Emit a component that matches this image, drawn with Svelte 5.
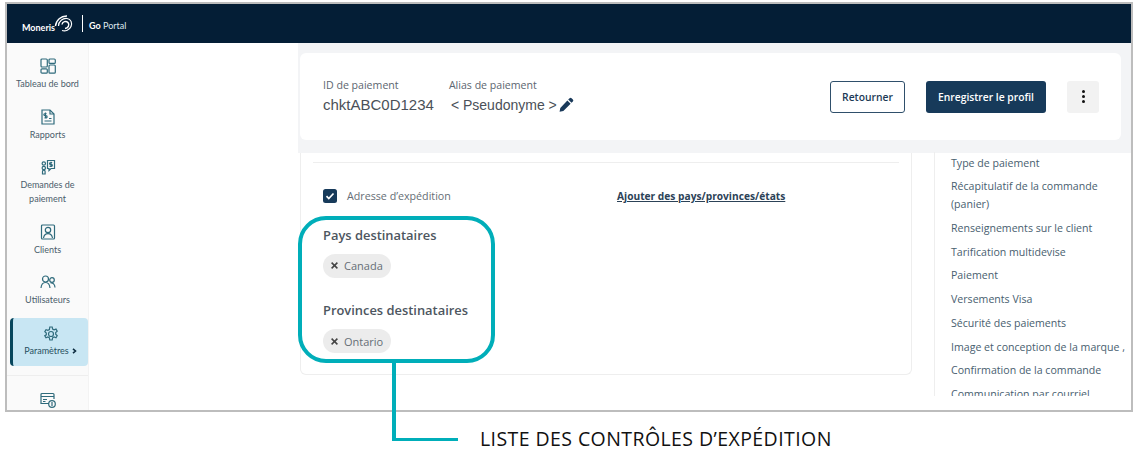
<script lang="ts">
  const navLinks = [
    { label: 'Type de paiement', h: 23 },
    { label: 'Récapitulatif de la commande (panier)', h: 42 },
    { label: 'Renseignements sur le client', h: 24 },
    { label: 'Tarification multidevise', h: 23 },
    { label: 'Paiement', h: 24 },
    { label: 'Versements Visa', h: 24 },
    { label: 'Sécurité des paiements', h: 24 },
    { label: 'Image et conception de la marque ,', h: 23 },
    { label: 'Confirmation de la commande', h: 24 },
    { label: 'Communication par courriel', h: 24 },
  ];
</script>

<div class="frame">
  <header>
    <span class="moneris">Moneris</span>
    <svg class="swirl" width="20" height="18" viewBox="0 0 20 18" fill="none" stroke="#fff">
      <path d="M1.500 11C2 5 7 .8 13 1" stroke-width="1.400" />
      <path d="M4.500 11C4.500 6 9 3 13 3.500C17 4 18.500 8 17 11.500C15.500 15 11.500 16.500 8 15.500" stroke-width="1.200" />
      <path d="M8 9.500C8.500 6.500 12 5.500 14 7.500C16 10 14 13.500 11 13.500" stroke-width="1.500" />
    </svg>
    <span class="sep"></span>
    <span class="portal"><b>Go</b> Portal</span>
  </header>

  <div class="body">
    <aside>
      <div class="item" style="height:51px">
        <svg viewBox="0 0 16 16" width="16" height="16"><rect x="1" y="1" width="6.300" height="8" rx="1"/><rect x="9" y="1" width="6.300" height="4.400" rx="1"/><rect x="1" y="10.800" width="6.300" height="4.400" rx="1"/><rect x="9" y="7" width="6.300" height="8.200" rx="1"/></svg>
        <span>Tableau de bord</span>
      </div>
      <div class="item" style="height:50px">
        <svg viewBox="0 0 16 16" width="16" height="16"><path d="M2 1h8l4 4v10H2z"/><path d="M10 1v4h4M4.500 12h7M9 9.500h2.500M6.500 4.500H5a1 1 0 0 0 0 2.200h1a1 1 0 0 1 0 2.200H4.500M5.500 3.500v6"/></svg>
        <span>Rapports</span>
      </div>
      <div class="item" style="height:65px">
        <svg viewBox="0 0 16 16" width="16" height="16"><path d="M7.500 1.500h7v8H11l-2 2v-2H7.500z"/><circle cx="3.800" cy="4.500" r="1.700"/><circle cx="3.800" cy="9" r="1.700"/><path d="M2.500 15v-2.500a1.300 1.300 0 0 1 2.600 0V15zM12.200 3.500h-1.700a.9.9 0 0 0 0 1.900h.9a.9.9 0 0 1 0 1.900H9.500M11 2.800v5.200"/></svg>
        <span>Demandes de paiement</span>
      </div>
      <div class="item" style="height:50px">
        <svg viewBox="0 0 16 16" width="16" height="16"><rect x="1.500" y="1" width="13" height="14" rx="1"/><circle cx="8" cy="6" r="2.700"/><path d="M3.500 14c.500-3 2.500-4.300 4.500-4.300s4 1.300 4.500 4.300"/></svg>
        <span>Clients</span>
      </div>
      <div class="item" style="height:44px">
        <svg viewBox="0 0 16 16" width="16" height="16"><circle cx="5.500" cy="5" r="3"/><circle cx="12" cy="6" r="2.300"/><path d="M1 14c.300-3.500 2-5.500 4.500-5.500S9.700 10.500 10 14M10.500 9c2.500-.500 4.300 1.500 4.500 4.500"/></svg>
        <span>Utilisateurs</span>
      </div>
      <div class="item active">
        <svg viewBox="0 0 16 16" width="16" height="16"><circle cx="8" cy="8" r="2.500"/><path d="M6.800 1h2.400l.4 2 1.500.8 1.900-.700 1.200 2-1.500 1.400v1.800l1.500 1.400-1.200 2-1.900-.700-1.500.8-.4 2.200H6.800l-.4-2.200-1.500-.8-1.900.7-1.200-2L3.300 8.900V7.100L1.800 5.700l1.200-2 1.900.7 1.500-.8z"/></svg>
        <span>Paramètres<svg class="chev" width="5" height="6" viewBox="0 0 5 6"><path d="M1 .8L3.500 3 1 5.200"/></svg></span>
      </div>
      <div class="rule"></div>
      <div class="item last">
        <svg viewBox="0 0 16 16" width="16" height="16"><path d="M9 11.500H1V2.500a1 1 0 0 1 1-1h11a1 1 0 0 1 1 1V7"/><path d="M1 4.500h13M3 7.500h4M3 9.500h2.500"/><circle cx="12" cy="12" r="3.300"/><path d="M12 10v4"/></svg>
      </div>
    </aside>

    <div class="gutter"></div>

    <main>
      <div class="band">
        <section class="top-card">
          <div class="ids">
            <div class="id-col">
              <span class="cap">ID de paiement</span>
              <span class="val">chktABC0D1234</span>
            </div>
            <div class="alias-col">
              <span class="cap">Alias de paiement</span>
              <span class="val alias">&lt; Pseudonyme &gt;<svg width="15" height="15" viewBox="0 0 16 16"><path fill="#1a3a5a" d="M11.300 1.200a1.500 1.500 0 0 1 2.100 0l1.400 1.400a1.500 1.500 0 0 1 0 2.100l-1.500 1.500-3.500-3.500zM8.900 3.600l3.500 3.500-7.800 7.800-4 .9.800-4.100z"/></svg></span>
            </div>
          </div>
          <button class="ghost">Retourner</button>
          <button class="primary">Enregistrer le profil</button>
          <button class="more" aria-label="Plus"><i></i><i></i><i></i></button>
        </section>
      </div>

      <div class="lower">
        <section class="panel">
          <div class="hr"></div>
          <div class="ship-row">
            <label class="check">
              <span class="box"><svg width="10" height="10" viewBox="0 0 10 10" fill="none" stroke="#fff" stroke-width="1.700"><path d="M1.500 5.200l2.300 2.300 4.700-5"/></svg></span>
              Adresse d’expédition
            </label>
            <span class="add">Ajouter des pays/provinces/états</span>
          </div>
          <h3>Pays destinataires</h3>
          <span class="chip"><svg width="7" height="7" viewBox="0 0 7 7" stroke="#444" stroke-width="1.500"><path d="M.6 .6l5.800 5.800M6.400 .6L.6 6.400"/></svg>Canada</span>
          <h3 class="second">Provinces destinataires</h3>
          <span class="chip"><svg width="7" height="7" viewBox="0 0 7 7" stroke="#444" stroke-width="1.500"><path d="M.6 .6l5.800 5.800M6.400 .6L.6 6.400"/></svg>Ontario</span>
        </section>
        <nav>
          {#each navLinks as l}
            <a href="#top" style="min-height:{l.h}px">{l.label}</a>
          {/each}
        </nav>
      </div>
    </main>
  </div>
</div>

<div class="callout"></div>
<div class="leader"></div>
<div class="callout-text">LISTE DES CONTRÔLES D’EXPÉDITION</div>

<style>
  :global(body) { margin: 0; background: #fff; }

  .frame {
    width: 1124px;
    height: 406px;
    margin: 2px 0 0 5px;
    border: 2px solid #bdbdbd;
    overflow: hidden;
    display: flex;
    flex-direction: column;
    font-family: "Open Sans", sans-serif;
  }

  header {
    height: 39px;
    flex: none;
    background: #041e36;
    color: #fff;
    display: flex;
    align-items: center;
    padding-left: 15px;
    box-sizing: border-box;
  }
  .moneris { font: 700 9px Lato, sans-serif; margin-top: 7px; width: 34px; }
  .swirl { margin-left: -2px; flex: none; }
  .sep { width: 1px; height: 17px; background: #fff; margin: 0 6px 0 8px; }
  .portal { font: 400 9px Lato, sans-serif; color: #dfe6ec; margin-top: 4px; }
  .portal b { color: #fff; }

  .body { flex: 1; display: flex; min-height: 0; }

  aside {
    width: 82px;
    flex: none;
    background: #fafafa;
    border-right: 1px solid #f3f3f3;
    box-sizing: border-box;
    padding-top: 15px;
    font-family: Lato, sans-serif;
    font-size: 9px;
    color: #4a5d6b;
    text-align: center;
  }
  .item { display: flex; flex-direction: column; align-items: center; }
  .item span { margin-top: 3px; line-height: 14px; max-width: 70px; }
  .item svg { fill: none; stroke: #2f6b7c; stroke-width: 1.200; flex: none; }
  .active {
    height: 48px;
    width: 78px;
    margin: 0 0 0 3px;
    box-sizing: border-box;
    background: #c8e6f3;
    border-left: 3px solid #07465c;
    border-radius: 4px;
    padding-top: 8px;
    color: #27505f;
  }
  .active span { max-width: none; white-space: nowrap; margin-top: 2px; }
  .item svg.chev { stroke: #0d2c40; stroke-width: 1.600; margin-left: 3px; display: inline-block; }
  .rule { height: 1px; background: #eeeeee; margin: 9px 0 0; }
  .last { padding-top: 16px; }

  .gutter { width: 209px; flex: none; }

  main { flex: 1; min-width: 0; display: flex; flex-direction: column; }

  .band {
    height: 110px;
    flex: none;
    box-sizing: border-box;
    background: #f3f4f6;
    padding: 10px 10px 0 2px;
  }
  .top-card {
    height: 87px;
    box-sizing: border-box;
    background: #fff;
    border-radius: 6px;
    display: flex;
    align-items: center;
    padding: 0 22px 0 23px;
  }
  .ids { flex: 1; display: flex; gap: 15px; margin-top: -1px; }
  .id-col, .alias-col { display: flex; flex-direction: column; }
  .cap { font-size: 10.600px; line-height: 15px; color: #5c6670; }
  .val { font: 400 15px/20px "Liberation Sans", sans-serif; color: #4a5058; margin-top: 2px; }
  .alias { font-size: 14px; display: flex; align-items: center; margin-left: 2px; gap: 2px; }

  button { font-family: "Open Sans", sans-serif; font-size: 10.300px; font-weight: 600; height: 32px; border-radius: 3px; padding: 0; }
  .ghost { width: 75px; background: #fff; border: 1px solid #2f4f6b; color: #1c3a56; margin-right: 21px; }
  .primary { width: 120px; background: #173a5a; border: 0; color: #fff; margin-right: 21px; }
  .more { width: 32px; background: #f2f2f2; border: 0; display: flex; flex-direction: column; align-items: center; justify-content: center; gap: 2px; }
  .more i { width: 3px; height: 3px; border-radius: 50%; background: #111; }

  .lower { flex: 1; min-height: 0; display: flex; }

  .panel {
    width: 612px;
    height: 222px;
    flex: none;
    margin-left: 2px;
    box-sizing: border-box;
    border: 1px solid #eeeeee;
    border-top: 0;
    border-radius: 0 0 6px 6px;
    padding: 9px 12px 0 22px;
    color: #4d5660;
  }
  .hr { height: 1px; background: #eeeeee; margin: 0 0 0 -10px; }
  .ship-row { display: flex; align-items: center; margin-top: 24px; height: 18px; }
  .check { display: flex; align-items: center; gap: 10px; width: 294px; font-size: 10.700px; color: #666e76; }
  .box { width: 14px; height: 14px; border-radius: 2.500px; background: #173a5a; display: flex; align-items: center; justify-content: center; }
  .add { font-size: 10.200px; font-weight: 700; color: #2c4257; text-decoration: underline; }
  h3 { margin: 21px 0 8px; font-size: 12.900px; line-height: 18px; font-weight: 600; color: #4d5660; }
  .second { margin: 23px 0 9px; }
  .chip {
    display: inline-flex;
    align-items: center;
    gap: 6px;
    height: 24px;
    padding: 0 8px;
    background: #ececec;
    border-radius: 12px;
    font-size: 11px;
    color: #666e76;
  }

  nav {
    margin-left: 22px;
    border-left: 1px solid #eeeeee;
    height: 244px;
    flex: 1;
    min-width: 0;
    padding: 2px 0 0 16px;
    margin-top: -1px;
    overflow: hidden;
    display: flex;
    flex-direction: column;
    box-sizing: border-box;
  }
  nav a {
    display: block;
    font-size: 10.600px;
    line-height: 18px;
    color: #48606f;
    text-decoration: none;
    margin-right: 4px;
    flex: none;
  }

  .callout {
    position: absolute;
    left: 298px;
    top: 216px;
    width: 197px;
    height: 147px;
    box-sizing: border-box;
    border: 4px solid #00aeb9;
    border-radius: 28px;
  }
  .leader {
    position: absolute;
    left: 392px;
    top: 362px;
    width: 66px;
    height: 79px;
    box-sizing: border-box;
    border-left: 4px solid #00aeb9;
    border-bottom: 3.500px solid #00aeb9;
  }
  .callout-text {
    position: absolute;
    left: 480px;
    top: 427px;
    font: 400 19.500px/24px "Open Sans", sans-serif;
    letter-spacing: 0.42px;
    color: #111;
    white-space: nowrap;
  }
</style>
